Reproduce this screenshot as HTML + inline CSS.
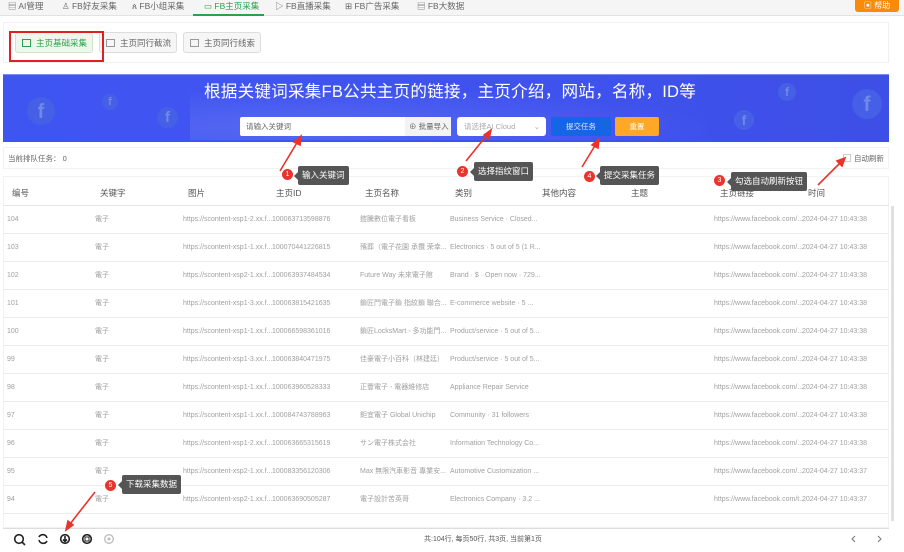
<!DOCTYPE html>
<html><head><meta charset="utf-8"><style>
*{margin:0;padding:0;box-sizing:border-box}
body{width:904px;height:552px;overflow:hidden;background:#fff;font-family:"Liberation Sans","Noto Sans CJK SC",sans-serif;position:relative;color:#333}
.a{position:absolute;white-space:nowrap}
.nav{position:absolute;left:0;top:0;width:904px;height:16px;background:#f5f5f5;border-bottom:1px solid #e2e2e2}
.nav span{position:absolute;top:1px;font-size:8.5px;color:#666;line-height:11px}
.btn{position:absolute;top:32px;height:21px;border:1px solid #ddd;border-radius:3px;background:#f6f6f6;font-size:8.5px;color:#666;padding:5px 0 0 20px;line-height:10px}
.btn i{position:absolute;left:6px;top:6px;width:9px;height:8px;border:1px solid #999}
.hd{position:absolute;top:188px;font-size:8.5px;color:#555;line-height:10px}
.row{position:absolute;left:3px;width:886px;height:28px;border-bottom:1px solid #ebebeb;font-size:7px;color:#a0a0a0}
.row span{position:absolute;top:9px;line-height:9px;height:9px}
.tip{position:absolute;background:#555;color:#fff;font-size:8.5px;height:19px;padding:4px 4px 0;border-radius:2px;line-height:11px}
.tip:before{content:"";position:absolute;left:-4px;top:6px;border:4px solid transparent;border-left:0;border-right-color:#555}
.num{position:absolute;width:11px;height:11px;border-radius:50%;background:#e8342c;color:#fff;font-size:7px;text-align:center;line-height:11px}
.fb{position:absolute;border-radius:50%;background:#4560e6;color:#7088e8;font-weight:bold;text-align:center;font-family:"Liberation Sans",sans-serif}
</style></head><body>
<div class="nav">
<span style="left:8px">▤ AI管理</span>
<span style="left:62px">♙ FB好友采集</span>
<span style="left:132px">ጰ FB小组采集</span>
<span style="left:204px;color:#2aa24a">▭ FB主页采集</span>
<span style="left:275px">▷ FB直播采集</span>
<span style="left:345px">⊞ FB广告采集</span>
<span style="left:417px">▤ FB大数据</span>
</div>
<div class="a" style="left:193px;top:14px;width:71px;height:2px;background:#2aa24a"></div>
<div class="a" style="left:855px;top:0;width:44px;height:12px;background:#f98b0c;border-radius:0 0 3px 3px;color:#fff;font-size:8px;text-align:center;line-height:11px">▣ 帮助</div>

<div class="a" style="left:3px;top:22px;width:886px;height:41px;border:1px solid #f0f0f0"></div>
<div class="btn" style="left:15px;width:78px;background:#eef7ec;color:#2aa24a;border-color:#cde6c8"><i style="border-color:#2aa24a"></i>主页基础采集</div>
<div class="btn" style="left:99px;width:78px"><i></i>主页同行截流</div>
<div class="btn" style="left:183px;width:78px"><i></i>主页同行线索</div>
<div class="a" style="left:9px;top:31px;width:95px;height:31px;border:2px solid #e02020"></div>

<div class="a" style="left:3px;top:74px;width:886px;height:68px;background:linear-gradient(90deg,#3f55f2,#3f52ee 60%,#3d4fe6);border-top:1px solid #7b8af5"></div>
<div class="a" style="left:190px;top:80px;width:600px;height:60px;background:radial-gradient(ellipse at 20% 80%,rgba(255,255,255,.12),transparent 60%)"></div>
<div class="fb" style="left:27px;top:97px;width:28px;height:28px;font-size:20px;line-height:30px">f</div>
<div class="fb" style="left:102px;top:94px;width:16px;height:16px;font-size:11px;line-height:17px">f</div>
<div class="fb" style="left:157px;top:107px;width:21px;height:21px;font-size:15px;line-height:22px">f</div>
<div class="fb" style="left:778px;top:83px;width:18px;height:18px;font-size:12px;line-height:19px">f</div>
<div class="fb" style="left:734px;top:110px;width:20px;height:20px;font-size:14px;line-height:21px">f</div>
<div class="fb" style="left:852px;top:89px;width:30px;height:30px;font-size:21px;line-height:32px">f</div>
<div class="a" style="left:204px;top:82px;font-size:16.6px;line-height:20px;color:#fff;letter-spacing:.2px">根据关键词采集FB公共主页的链接，主页介绍，网站，名称，ID等</div>
<div class="a" style="left:240px;top:117px;width:211px;height:19px;background:#fff;border-radius:2px;font-size:7.5px;color:#666;padding:5px 6px;line-height:9px">请输入关键词</div>
<div class="a" style="left:405px;top:117px;width:46px;height:19px;background:#f3f3f3;font-size:7.5px;color:#666;padding:5px 4px;line-height:9px">⊕ 批量导入</div>
<div class="a" style="left:457px;top:117px;width:89px;height:19px;background:#fff;border-radius:3px;font-size:7.5px;color:#aaa;padding:5px 7px;line-height:9px">请选择AI Cloud<span style="position:absolute;right:6px">⌄</span></div>
<div class="a" style="left:551px;top:117px;width:60px;height:19px;background:#1466e6;border-radius:2px;font-size:7.5px;color:#dfe8ff;text-align:center;line-height:19px">提交任务</div>
<div class="a" style="left:615px;top:117px;width:44px;height:19px;background:#ffa726;border-radius:2px;font-size:7.5px;color:#fff;text-align:center;line-height:19px">重置</div>

<div class="a" style="left:3px;top:147px;width:886px;height:22px;border:1px solid #f2f2f2"></div>
<div class="a" style="left:8px;top:154px;font-size:7.5px;color:#666;line-height:9px">当前排队任务： 0</div>
<div class="a" style="left:843px;top:154px;width:8px;height:8px;border:1px solid #ccc"></div>
<div class="a" style="left:854px;top:154px;font-size:7.5px;color:#666;line-height:9px">自动刷新</div>

<div class="a" style="left:3px;top:176px;width:886px;height:352px;border:1px solid #f2f2f2"></div>
<div class="hd" style="left:12px">编号</div><div class="hd" style="left:100px">关键字</div><div class="hd" style="left:188px">图片</div><div class="hd" style="left:276px">主页ID</div><div class="hd" style="left:365px">主页名称</div><div class="hd" style="left:455px">类别</div><div class="hd" style="left:542px">其他内容</div><div class="hd" style="left:631px">主题</div><div class="hd" style="left:720px">主页链接</div><div class="hd" style="left:808px">时间</div>
<div class="a" style="left:3px;top:205px;width:886px;height:1px;background:#e5e5e5"></div>
<div class="a" style="left:891px;top:206px;width:3px;height:315px;background:#e0e0e0"></div>

<div class="row" style="top:206px"><span style="left:4px">104</span><span style="left:92px">電子</span><span style="left:180px">https://scontent-xsp1-2.xx.f...</span><span style="left:269px">100063713598876</span><span style="left:357px">鎧騰數位電子看板</span><span style="left:447px">Business Service · Closed...</span><span style="left:711px">https://www.facebook.com/...</span><span style="left:799px">2024-04-27 10:43:38</span></div>
<div class="row" style="top:234px"><span style="left:4px">103</span><span style="left:92px">電子</span><span style="left:180px">https://scontent-xsp1-1.xx.f...</span><span style="left:269px">100070441226815</span><span style="left:357px">殯葬（電子花園 承攬 荣幸...</span><span style="left:447px">Electronics · 5 out of 5 (1 R...</span><span style="left:711px">https://www.facebook.com/...</span><span style="left:799px">2024-04-27 10:43:38</span></div>
<div class="row" style="top:262px"><span style="left:4px">102</span><span style="left:92px">電子</span><span style="left:180px">https://scontent-xsp2-1.xx.f...</span><span style="left:269px">100063937484534</span><span style="left:357px">Future Way 未來電子館</span><span style="left:447px">Brand · $ · Open now · 729...</span><span style="left:711px">https://www.facebook.com/...</span><span style="left:799px">2024-04-27 10:43:38</span></div>
<div class="row" style="top:290px"><span style="left:4px">101</span><span style="left:92px">電子</span><span style="left:180px">https://scontent-xsp1-3.xx.f...</span><span style="left:269px">100063815421635</span><span style="left:357px">鎖匠門電子鎖 指紋鎖 聯合...</span><span style="left:447px">E-commerce website · 5 ...</span><span style="left:711px">https://www.facebook.com/...</span><span style="left:799px">2024-04-27 10:43:38</span></div>
<div class="row" style="top:318px"><span style="left:4px">100</span><span style="left:92px">電子</span><span style="left:180px">https://scontent-xsp1-1.xx.f...</span><span style="left:269px">100066598361016</span><span style="left:357px">鎖匠LocksMart - 多功能門...</span><span style="left:447px">Product/service · 5 out of 5...</span><span style="left:711px">https://www.facebook.com/...</span><span style="left:799px">2024-04-27 10:43:38</span></div>
<div class="row" style="top:346px"><span style="left:4px">99</span><span style="left:92px">電子</span><span style="left:180px">https://scontent-xsp1-3.xx.f...</span><span style="left:269px">100063840471975</span><span style="left:357px">佳豪電子小百科（林建廷）</span><span style="left:447px">Product/service · 5 out of 5...</span><span style="left:711px">https://www.facebook.com/...</span><span style="left:799px">2024-04-27 10:43:38</span></div>
<div class="row" style="top:374px"><span style="left:4px">98</span><span style="left:92px">電子</span><span style="left:180px">https://scontent-xsp1-1.xx.f...</span><span style="left:269px">100063960528333</span><span style="left:357px">正豐電子 - 電器維修店</span><span style="left:447px">Appliance Repair Service</span><span style="left:711px">https://www.facebook.com/...</span><span style="left:799px">2024-04-27 10:43:38</span></div>
<div class="row" style="top:402px"><span style="left:4px">97</span><span style="left:92px">電子</span><span style="left:180px">https://scontent-xsp1-1.xx.f...</span><span style="left:269px">100084743788963</span><span style="left:357px">鉅宜電子 Global Unichip</span><span style="left:447px">Community · 31 followers</span><span style="left:711px">https://www.facebook.com/...</span><span style="left:799px">2024-04-27 10:43:38</span></div>
<div class="row" style="top:430px"><span style="left:4px">96</span><span style="left:92px">電子</span><span style="left:180px">https://scontent-xsp1-2.xx.f...</span><span style="left:269px">100063665315619</span><span style="left:357px">サン電子株式会社</span><span style="left:447px">Information Technology Co...</span><span style="left:711px">https://www.facebook.com/...</span><span style="left:799px">2024-04-27 10:43:38</span></div>
<div class="row" style="top:458px"><span style="left:4px">95</span><span style="left:92px">電子</span><span style="left:180px">https://scontent-xsp2-1.xx.f...</span><span style="left:269px">100083356120306</span><span style="left:357px">Max 無限汽車影音 專業安...</span><span style="left:447px">Automotive Customization ...</span><span style="left:711px">https://www.facebook.com/...</span><span style="left:799px">2024-04-27 10:43:37</span></div>
<div class="row" style="top:486px"><span style="left:4px">94</span><span style="left:92px">電子</span><span style="left:180px">https://scontent-xsp2-1.xx.f...</span><span style="left:269px">100063690505287</span><span style="left:357px">電子設計苦英哥</span><span style="left:447px">Electronics Company · 3.2 ...</span><span style="left:711px">https://www.facebook.com/t...</span><span style="left:799px">2024-04-27 10:43:37</span></div>
<div class="a" style="left:3px;top:528px;width:886px;height:1px;background:#ddd"></div>

<svg class="a" style="left:0;top:0" width="904" height="552">
<g fill="none" stroke="#222" stroke-width="1.6">
<circle cx="19" cy="539" r="4.3"/><line x1="22" y1="542" x2="25" y2="545"/>
<path d="M39 537 A4.3 4.3 0 0 1 47 538 M47 541 A4.3 4.3 0 0 1 39 540"/>
<circle cx="65" cy="539" r="4.3"/><path d="M65 536v5M63 539.5l2 2 2-2"/>
<circle cx="87" cy="539" r="4.3"/><rect x="85" y="537" width="4" height="4" stroke-width="1"/>
</g>
<circle cx="109" cy="539" r="4.3" fill="none" stroke="#bbb" stroke-width="1.3"/><circle cx="109" cy="539" r="1.5" fill="#bbb"/>
<path d="M855 536l-3 3 3 3M878 536l3 3-3 3" fill="none" stroke="#777" stroke-width="1"/>
<g stroke="#e8342c" stroke-width="1.6" fill="#e8342c">
<line x1="280" y1="171" x2="298" y2="141"/><path d="M301 136l-1 9-6-3z"/>
<line x1="466" y1="161" x2="487" y2="135"/><path d="M491 130l-2 9-5-4z"/>
<line x1="582" y1="167" x2="596" y2="144"/><path d="M599 139l-1 9-6-3z"/>
<line x1="818" y1="185" x2="840" y2="163"/><path d="M845 158l-3 8-5-5z"/>
<line x1="95" y1="492" x2="70" y2="524"/><path d="M66 530l2-9 5 4z"/>
</g>
</svg>

<div class="num" style="left:282px;top:169px">1</div><div class="tip" style="left:298px;top:166px">输入关键词</div>
<div class="num" style="left:457px;top:166px">2</div><div class="tip" style="left:474px;top:162px">选择指纹窗口</div>
<div class="num" style="left:584px;top:171px">4</div><div class="tip" style="left:600px;top:166px">提交采集任务</div>
<div class="num" style="left:714px;top:175px">3</div><div class="tip" style="left:731px;top:172px">勾选自动刷新按钮</div>
<div class="num" style="left:105px;top:480px">5</div><div class="tip" style="left:122px;top:475px">下载采集数据</div>

<div class="a" style="left:424px;top:535px;font-size:7px;color:#555;line-height:9px">共:104行, 每页50行, 共3页, 当前第1页</div>
</body></html>
